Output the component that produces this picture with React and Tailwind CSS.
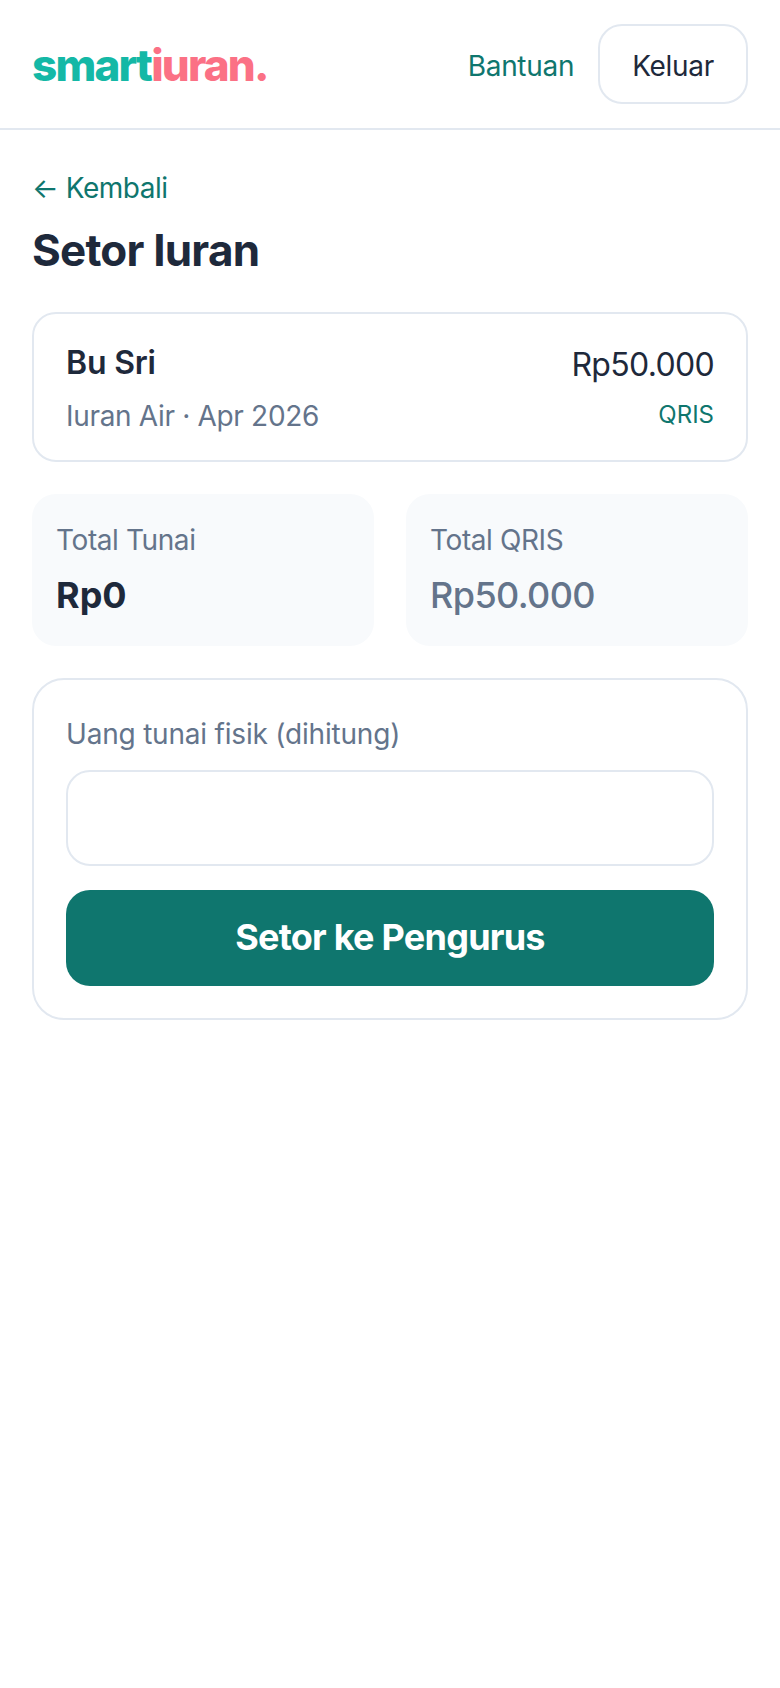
import React from "react";

const App = () => {
  return (
    <div className="min-h-[1688px] bg-white font-['Inter',sans-serif] text-[#1e293b]">
      <header className="flex h-[130px] items-center justify-between border-b-2 border-[#e2e8f0] px-8">
        <div className="pt-[2px] text-[44px] font-extrabold leading-[48px] tracking-[-1.8px]">
          <span className="text-[#14b8a6]">smart</span>
          <span className="text-[#fb7185]">iuran.</span>
        </div>
        <div className="flex items-center gap-6">
          <a className="pt-[4px] text-[28px] leading-[40px] tracking-[-0.3px] text-[#0f766e]">Bantuan</a>
          <button className="h-20 rounded-3xl border-2 border-[#e2e8f0] px-8 pt-[4px] text-[28px] leading-[40px] tracking-[-0.3px] text-[#1e293b]">
            Keluar
          </button>
        </div>
      </header>

      <main className="px-8 pt-9">
        <a className="flex h-11 items-center text-[28px] leading-[44px] tracking-[-0.47px] text-[#0f766e]">← Kembali</a>
        <h1 className="mt-[7px] text-[44px] font-bold leading-[66px] tracking-[-0.8px]">Setor Iuran</h1>

        <section className="mt-[29px] flex h-[150px] justify-between rounded-3xl border-2 border-[#e2e8f0] px-8 pt-[29px]">
          <div>
            <div className="text-[32px] font-semibold leading-[40px] tracking-[-0.2px]">Bu Sri</div>
            <div className="mt-3 text-[28px] leading-[42px] tracking-[-0.32px] text-[#64748b]">Iuran Air · Apr 2026</div>
          </div>
          <div className="text-right">
            <div className="text-[32px] leading-[44px] tracking-[-0.67px]">Rp50.000</div>
            <div className="mt-[10px] text-[24px] leading-[36px] text-[#0f766e]">QRIS</div>
          </div>
        </section>

        <section className="mt-8 grid grid-cols-2 gap-8">
          <div className="h-[152px] rounded-3xl bg-[#f8fafc] px-6 pt-[25px]">
            <div className="text-[28px] leading-[42px] tracking-[-0.4px] text-[#64748b]">Total Tunai</div>
            <div className="mt-[7px] text-[36px] font-bold leading-[54px]">Rp0</div>
          </div>
          <div className="h-[152px] rounded-3xl bg-[#f8fafc] px-6 pt-[25px]">
            <div className="text-[28px] leading-[42px] tracking-[-0.4px] text-[#64748b]">Total QRIS</div>
            <div className="mt-[7px] text-[36px] font-medium leading-[54px] tracking-[-0.6px] text-[#64748b]">Rp50.000</div>
          </div>
        </section>

        <section className="mt-8 rounded-[32px] border-2 border-[#e2e8f0] p-8">
          <label className="block text-[28px] leading-[44px] tracking-[-0.2px] text-[#64748b]">Uang tunai fisik (dihitung)</label>
          <input className="mt-[14px] block h-24 w-full rounded-3xl border-2 border-[#e2e8f0] px-6 text-[32px]" />
          <button className="mt-6 h-24 w-full rounded-3xl bg-[#0f766e] pb-[2px] text-[36px] font-bold tracking-[-0.76px] text-white">
            Setor ke Pengurus
          </button>
        </section>
      </main>
    </div>
  );
};

export default App;
